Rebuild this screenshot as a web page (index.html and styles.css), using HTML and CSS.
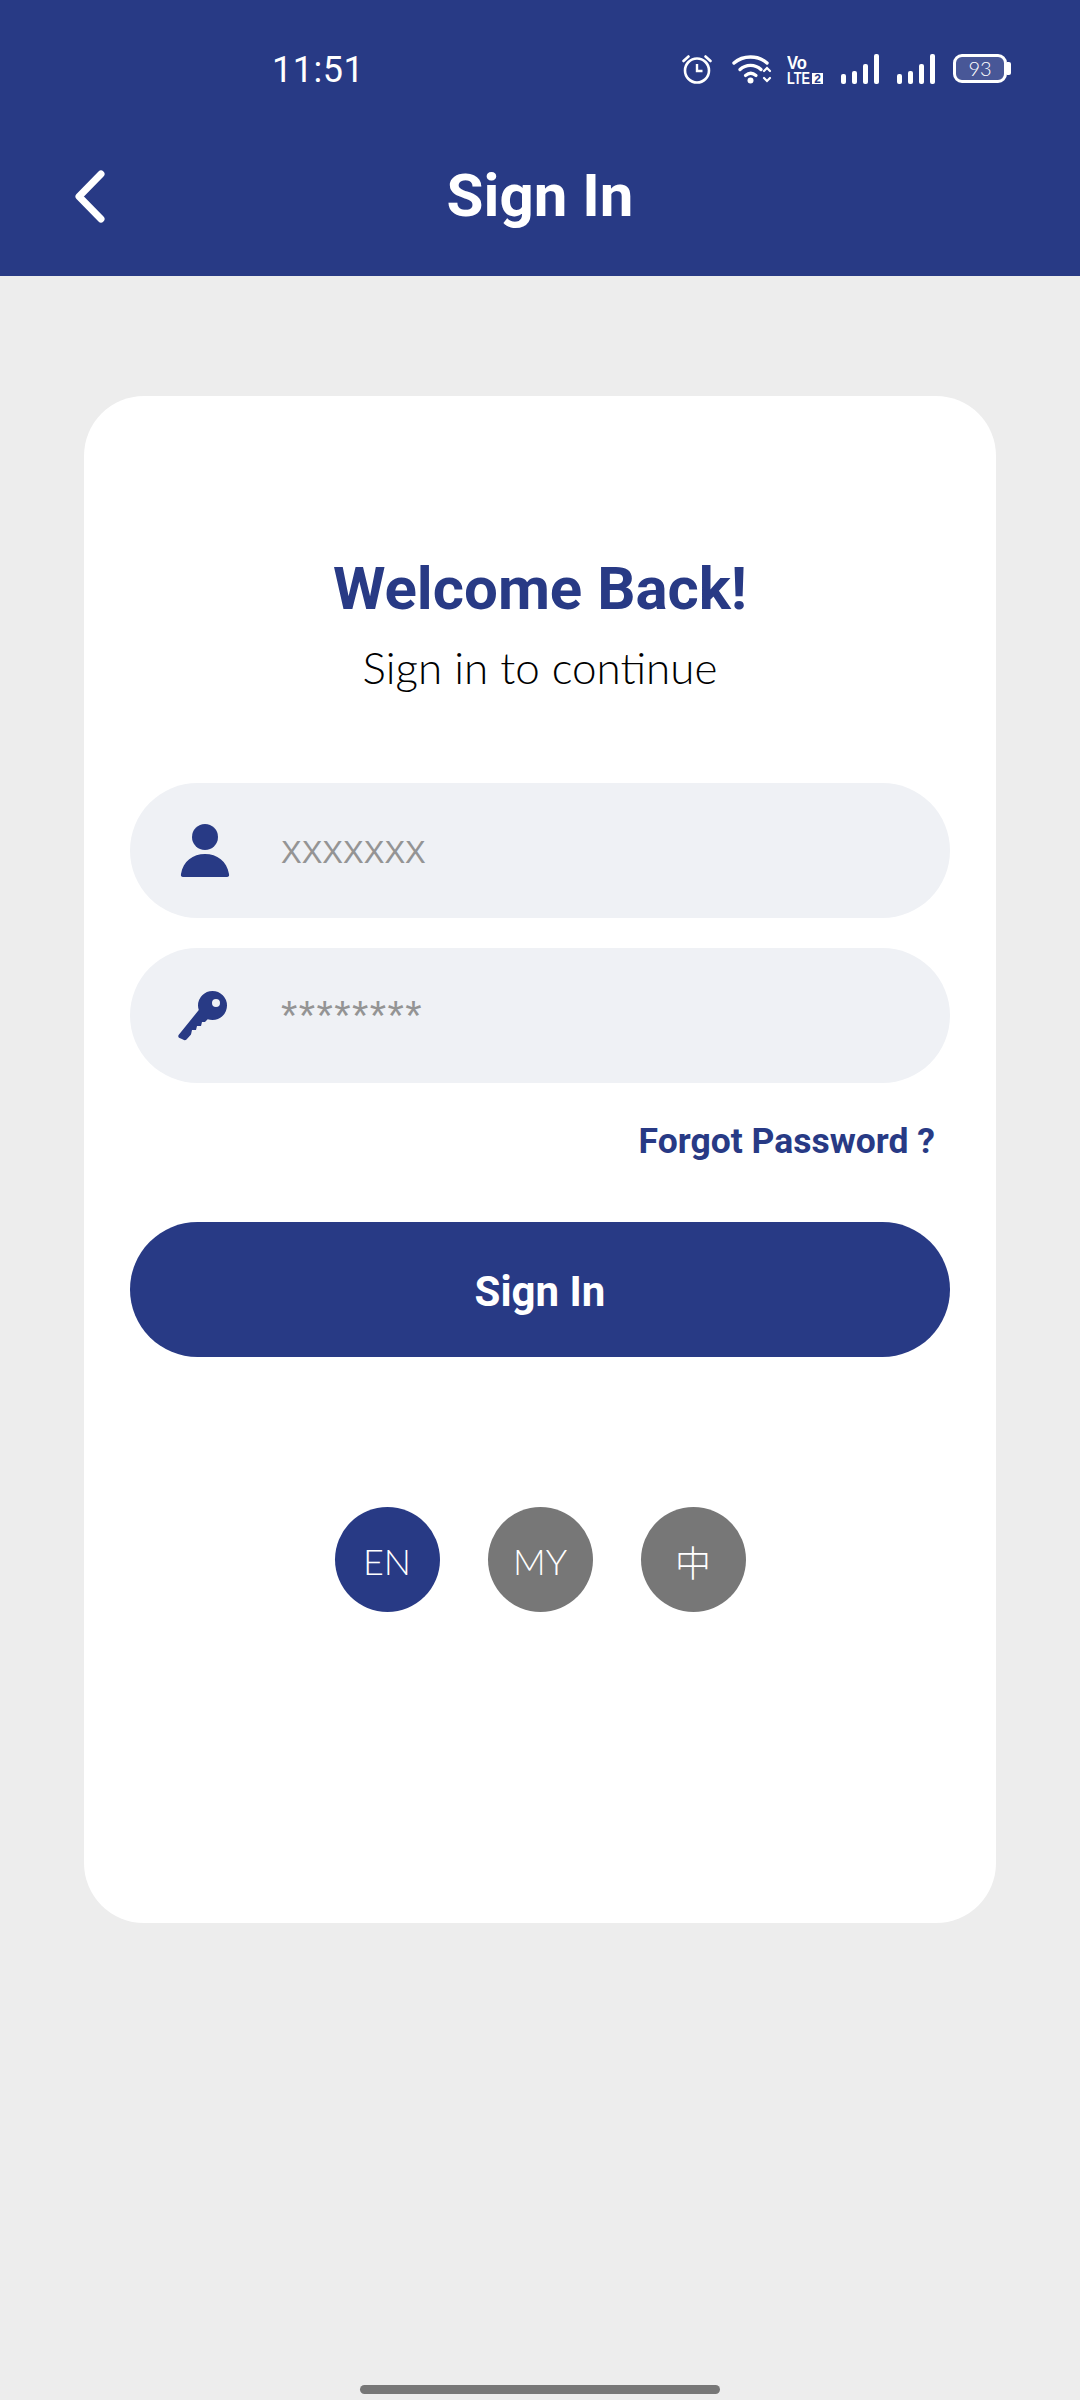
FILE: index.html
```html
<!DOCTYPE html>
<html lang="en">
<head>
    <meta charset="UTF-8">
    <meta name="viewport" content="width=device-width, initial-scale=1.0">
    <title>Sign In</title>
    <link rel="stylesheet" href="styles.css">
</head>
<body>
    <div class="top">
        <div class="status-bar">
            <span class="time">11:51</span>
            <div class="status-icons">
                <svg class="icon-alarm" width="30" height="30" viewBox="0 0 30 30" fill="none" stroke="#fff">
                    <circle cx="15" cy="16.5" r="12" stroke-width="2.6"/>
                    <path d="M15 10v7h5.5" stroke-width="2.4"/>
                    <path d="M1.5 7l5-4.5M28.5 7l-5-4.5" stroke-width="2.6" stroke-linecap="round"/>
                </svg>
                <svg class="icon-wifi" width="40" height="30" viewBox="0 0 40 30" fill="none" stroke="#fff" stroke-linecap="round">
                    <path d="M2 9C11 1 26 1 35 9" stroke-width="3.4"/>
                    <path d="M8 15.5C14 10 23 10 29 15.5" stroke-width="3.4"/>
                    <path d="M13.5 21.5C17 18.5 20.5 18.5 24 21.5" stroke-width="3.2"/>
                    <circle cx="18.5" cy="26.5" r="3" fill="#fff" stroke="none"/>
                    <path d="M32 17l3-3 3 3M32 24l3 3 3-3" stroke-width="2.2"/>
                </svg>
                <svg class="icon-volte" width="36" height="38" viewBox="0 0 36 38">
                    <text class="volte-vo" x="0" y="17" textLength="20" lengthAdjust="spacingAndGlyphs">Vo</text>
                    <text class="volte-lte" x="0" y="32" textLength="23" lengthAdjust="spacingAndGlyphs">LTE</text>
                    <rect x="25" y="21" width="11" height="11" fill="#fff"/>
                    <text class="volte-num" x="30.5" y="31" text-anchor="middle">2</text>
                </svg>
                <svg class="icon-signal" width="38" height="30" viewBox="0 0 38 30" fill="#fff">
                    <rect x="0" y="20" width="5" height="10" rx="2"/>
                    <rect x="11" y="17" width="5" height="13" rx="2"/>
                    <rect x="22" y="10" width="5" height="20" rx="2"/>
                    <rect x="33" y="0" width="5" height="30" rx="2"/>
                </svg>
                <svg class="icon-signal" width="38" height="30" viewBox="0 0 38 30" fill="#fff">
                    <rect x="0" y="20" width="5" height="10" rx="2"/>
                    <rect x="11" y="17" width="5" height="13" rx="2"/>
                    <rect x="22" y="10" width="5" height="20" rx="2"/>
                    <rect x="33" y="0" width="5" height="30" rx="2"/>
                </svg>
                <div class="battery">
                    <div class="battery-body">93</div>
                    <div class="battery-nub"></div>
                </div>
            </div>
        </div>
        <div class="title-bar">
            <svg class="back" width="40" height="62" viewBox="0 0 40 62" fill="none" stroke="#fff" stroke-width="7" stroke-linecap="round" stroke-linejoin="round">
                <path d="M31 8L9 30.500l22 22.500"/>
            </svg>
            <h1>Sign In</h1>
        </div>
    </div>

    <div class="content">
        <div class="card">
            <h2>Welcome Back!</h2>
            <p class="subtitle">Sign in to continue</p>

            <div class="field">
                <svg class="field-icon" width="54" height="54" viewBox="0 0 54 54" fill="#283a85">
                    <circle cx="27" cy="13" r="13"/>
                    <path d="M5 53c-1.500 0-2.500-1-2-3C5 37 15 30 27 30s22 7 24 20c.5 2-.5 3-2 3z"/>
                </svg>
                <span class="placeholder">XXXXXXX</span>
            </div>
            <div class="field">
                <svg class="field-icon" width="54" height="50" viewBox="0 0 54 50" fill="#283a85">
                    <path fill-rule="evenodd" d="M34.500 0a14.500 14.500 0 1 1 0 29c-1.700 0-3.300-.3-4.800-.8L27 31h-3l-1 4h-4l-1 4h-4l-1 4.500-4.500 5c-1 1-2.500 1-3.500 0L1 46.800c-1-1-1-2.300 0-3.300L20.800 19c-.5-1.400-.8-3-.8-4.500A14.500 14.500 0 0 1 34.500 0zM38 8a4 4 0 1 0 0 8 4 4 0 0 0 0-8z"/>
                </svg>
                <span class="placeholder placeholder-pass">********</span>
            </div>

            <a class="forgot">Forgot Password ?</a>
            <button class="sign-in">Sign In</button>

            <div class="languages">
                <div class="lang active">EN</div>
                <div class="lang">MY</div>
                <div class="lang">中</div>
            </div>
        </div>
    </div>

    <div class="home-bar"></div>
</body>
</html>
```

FILE: styles.css
```css
* {
    box-sizing: border-box;
}
body {
    margin: 0;
    width: 1080px;
    height: 2400px;
    position: relative;
    background: #ededed;
    font-family: Roboto, sans-serif;
    overflow: hidden;
}
.top {
    height: 276px;
    background: #283a85;
    color: white;
}
.status-bar {
    height: 140px;
    padding: 54px 69px 0 272px;
    display: flex;
    justify-content: space-between;
    align-items: flex-start;
}
.time {
    font-size: 36px;
    font-weight: 400;
    line-height: 30px;
    margin-top: 1px;
    letter-spacing: 0.5px;
}
.status-icons {
    display: flex;
    align-items: flex-start;
}
.icon-wifi {
    margin-left: 20px;
}
.icon-volte {
    margin-left: 15px;
    margin-top: -2px;
}
.icon-signal {
    margin-left: 18px;
}
.volte-vo {
    font-family: "Liberation Sans", sans-serif;
    font-size: 19px;
    font-weight: 700;
    fill: white;
}
.volte-lte {
    font-family: "Liberation Sans", sans-serif;
    font-size: 16px;
    font-weight: 700;
    fill: white;
}
.volte-num {
    font-family: "Liberation Sans", sans-serif;
    font-size: 12px;
    font-weight: 700;
    fill: #283a85;
}
.battery {
    margin-left: 18px;
    display: flex;
    align-items: center;
}
.battery-body {
    width: 54px;
    height: 29px;
    border: 3px solid white;
    border-radius: 9px;
    background: rgba(255, 255, 255, 0.15);
    font-family: Lato, sans-serif;
    font-size: 20px;
    font-weight: 300;
    line-height: 23px;
    text-align: center;
}
.battery-nub {
    width: 4px;
    height: 13px;
    background: white;
    border-radius: 0 2px 2px 0;
}
.title-bar {
    height: 136px;
    position: relative;
    display: flex;
    align-items: center;
    justify-content: center;
}
.title-bar h1 {
    margin: 0 0 24px;
    font-size: 60px;
    font-weight: 700;
    line-height: 70px;
}
.back {
    position: absolute;
    left: 70px;
    top: 26px;
}
.content {
    padding: 120px 84px 0;
}
.card {
    height: 1527px;
    background: white;
    border-radius: 60px;
    padding: 158px 46px 0;
    display: flex;
    flex-direction: column;
}
.card h2 {
    margin: 0;
    text-align: center;
    color: #283a85;
    font-size: 60px;
    font-weight: 700;
    line-height: 70px;
}
.subtitle {
    margin: 18px 0 91px;
    text-align: center;
    color: #000;
    font-family: Lato, sans-serif;
    font-size: 44px;
    font-weight: 300;
    line-height: 50px;
}
.field {
    height: 135px;
    margin-bottom: 30px;
    padding-left: 48px;
    border-radius: 68px;
    background: #eff1f5;
    display: flex;
    align-items: center;
}
.field-icon {
    flex: none;
}
.placeholder {
    margin-left: 49px;
    padding-top: 5px;
    color: #949494;
    font-family: "Liberation Sans", sans-serif;
    font-size: 31px;
}
.placeholder-pass {
    padding-top: 0;
    font-size: 42px;
    letter-spacing: 1.4px;
}
.forgot {
    align-self: flex-end;
    margin: 7px 15px 0 0;
    color: #283a85;
    font-size: 35.5px;
    font-weight: 700;
    line-height: 42px;
}
.sign-in {
    height: 135px;
    margin-top: 60px;
    padding-top: 4px;
    border: none;
    border-radius: 68px;
    background: #283a85;
    color: white;
    font-family: Roboto, sans-serif;
    font-size: 42px;
    font-weight: 700;
}
.languages {
    margin-top: 150px;
    display: flex;
    justify-content: center;
    gap: 48px;
}
.lang {
    width: 105px;
    height: 105px;
    padding-top: 3px;
    border-radius: 50%;
    background: #777;
    color: white;
    font-family: Lato, "Noto Sans CJK SC", sans-serif;
    font-size: 36px;
    font-weight: 300;
    display: flex;
    align-items: center;
    justify-content: center;
}
.lang.active {
    background: #283a85;
}
.home-bar {
    position: absolute;
    left: 360px;
    bottom: 6px;
    width: 360px;
    height: 9px;
    border-radius: 5px;
    background: #777;
}
```
